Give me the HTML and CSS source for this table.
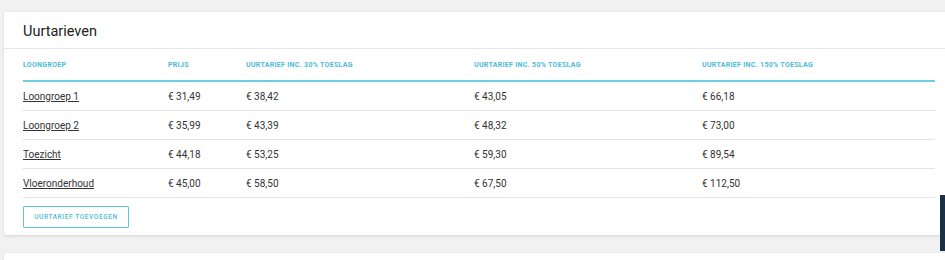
FILE: index.html
```html
<!DOCTYPE html>
<html lang="nl">
<head>
<meta charset="utf-8">
<title>Uurtarieven</title>
<link rel="stylesheet" href="styles.css">
</head>
<body>
<div class="page">
  <section class="card">
    <header class="card-header">
      <h2 class="card-title">Uurtarieven</h2>
    </header>
    <div class="card-body">
      <table class="rates">
        <colgroup>
          <col class="c1"><col class="c2"><col class="c3"><col class="c4"><col class="c5">
        </colgroup>
        <thead>
          <tr>
            <th>Loongroep</th>
            <th>Prijs</th>
            <th>Uurtarief inc. 30% toeslag</th>
            <th>Uurtarief inc. 50% toeslag</th>
            <th>Uurtarief inc. 150% toeslag</th>
          </tr>
        </thead>
        <tbody>
          <tr>
            <td><a href="#" class="link">Loongroep 1</a></td>
            <td>€ 31,49</td><td>€ 38,42</td><td>€ 43,05</td><td>€ 66,18</td>
          </tr>
          <tr>
            <td><a href="#" class="link">Loongroep 2</a></td>
            <td>€ 35,99</td><td>€ 43,39</td><td>€ 48,32</td><td>€ 73,00</td>
          </tr>
          <tr>
            <td><a href="#" class="link">Toezicht</a></td>
            <td>€ 44,18</td><td>€ 53,25</td><td>€ 59,30</td><td>€ 89,54</td>
          </tr>
          <tr>
            <td><a href="#" class="link">Vloeronderhoud</a></td>
            <td>€ 45,00</td><td>€ 58,50</td><td>€ 67,50</td><td>€ 112,50</td>
          </tr>
        </tbody>
      </table>
      <button class="btn-outline" type="button">Uurtarief toevoegen</button>
    </div>
  </section>
  <section class="card card-next"></section>
</div>
<div class="side-tab"></div>
</body>
</html>
```
FILE: styles.css
```css
html, body {
  margin: 0;
  padding: 0;
  overflow: hidden;
  background: #f1f1f1;
  font-family: Roboto, "Liberation Sans", Arial, sans-serif;
  color: #333;
}
.page {
  padding: 12px 0 0 4px;
  width: 952px;
}
.card {
  background: #fff;
  border-radius: 3px;
  box-shadow: 0 1px 3px rgba(0,0,0,0.12);
}
.card-header {
  height: 36px;
  border-bottom: 1px solid #e6e6e6;
  display: flex;
  align-items: center;
  padding: 0 19px;
}
.card-title {
  margin: 0;
  font-size: 14.5px;
  font-weight: 400;
  color: #222;
  padding-top: 2px;
}
.card-body {
  padding: 0 19px 7px 19px;
}
.rates {
  width: 912px;
  border-collapse: collapse;
  table-layout: fixed;
}
.c1 { width: 145px; }
.c2 { width: 78px; }
.c3 { width: 228px; }
.c4 { width: 228px; }
.c5 { width: 233px; }
.rates th {
  height: 31px;
  padding: 0;
  text-align: left;
  font-size: 7px;
  font-weight: 700;
  text-transform: uppercase;
  letter-spacing: 0.3px;
  color: #4cbbd8;
  border-bottom: 2px solid #6fcde3;
  vertical-align: middle;
}
.rates td {
  height: 28px;
  padding: 0;
  font-size: 10px;
  color: #333;
  border-bottom: 1px solid #e3e3e3;
  vertical-align: middle;
}
.link {
  color: #333;
  text-decoration: underline;
}
.btn-outline {
  margin-top: 8px;
  height: 22px;
  width: 106px;
  padding: 0;
  background: #fff;
  border: 1px solid #5cc7df;
  border-radius: 1px;
  color: #4cbbd8;
  font-family: Roboto, "Liberation Sans", Arial, sans-serif;
  font-size: 6.5px;
  font-weight: 500;
  letter-spacing: 0.6px;
  text-transform: uppercase;
  display: block;
}
.card-next {
  margin-top: 18px;
  height: 7px;
  border-radius: 3px 3px 0 0;
}
.side-tab {
  position: fixed;
  right: 0;
  top: 195px;
  width: 5px;
  height: 56px;
  background: #1b2f45;
}
```
